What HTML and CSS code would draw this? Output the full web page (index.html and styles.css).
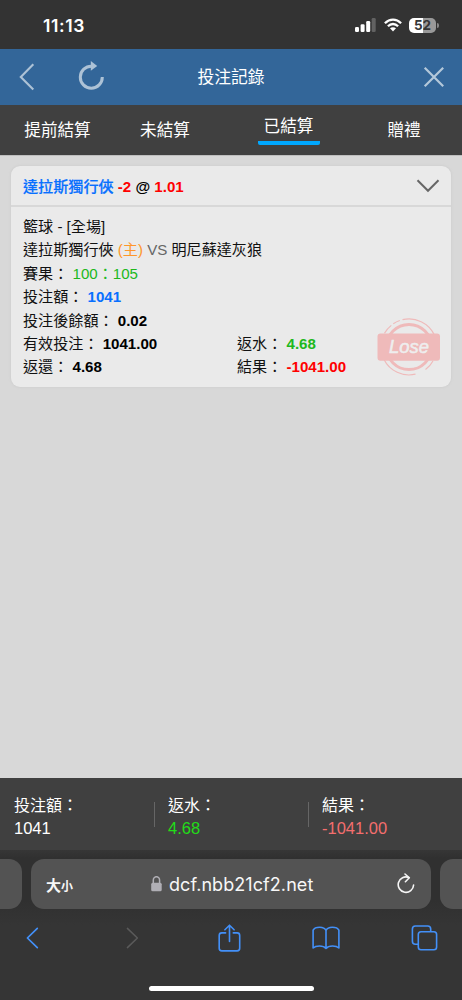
FILE: index.html
```html
<!DOCTYPE html>
<html lang="zh-Hant">
<head>
<meta charset="utf-8">
<meta name="viewport" content="width=device-width, initial-scale=1">
<title>投注記錄</title>
<link rel="stylesheet" href="styles.css">
</head>
<body>
<div class="screen">
  <div class="status">
    <span class="clock">11:13</span>
    <svg class="signal" width="21" height="14" viewBox="0 0 21 14">
      <rect x="0" y="9" width="4" height="5" rx="1.2" fill="#fff"/>
      <rect x="5.6" y="6.3" width="4" height="7.7" rx="1.2" fill="#fff"/>
      <rect x="11.2" y="3" width="4" height="11" rx="1.2" fill="#fff"/>
      <rect x="16.7" y="0" width="4" height="14" rx="1.2" fill="#626262"/>
    </svg>
    <svg class="wifi" width="18" height="14" viewBox="0 0 18 14">
      <g fill="none" stroke="#fff" stroke-width="2.3">
        <path d="M.9 5.2Q4.5 1.6 9 1.6t8.1 3.6"/>
        <path d="M3.9 8.3Q6.2 6 9 6t5.1 2.3"/>
      </g>
      <path d="M9 13.4l-3-3.1Q7.3 9.2 9 9.2t3 1.1z" fill="#fff"/>
    </svg>
    <div class="battery"><span class="charge">5</span><span>2</span></div>
  </div>

  <header class="titlebar">
    <svg class="back" width="16" height="28" viewBox="0 0 16 28"><path d="M14.3 1.2L1.8 14l12.5 12.6" fill="none" stroke="#adc2d6" stroke-width="2.1"/></svg>
    <svg class="reload" width="27" height="30" viewBox="0 0 27 30"><path d="M13.7 5.2A11 11 0 1 0 24.3 16" fill="none" stroke="#adc2d6" stroke-width="3"/><path d="M12.8 0l6.4 5.1-6.4 4.7z" fill="#adc2d6"/></svg>
    <h1>投注記錄</h1>
    <svg class="close" width="22" height="22" viewBox="0 0 22 22"><path d="M1.7 1.7l18.5 18.5M20.2 1.7L1.7 20.2" fill="none" stroke="#b4c8da" stroke-width="2.2"/></svg>
  </header>

  <nav class="tabs">
    <span>提前結算</span><span>未結算</span><span class="active">已結算</span><span>贈禮</span>
  </nav>

  <main>
    <article class="card">
      <div class="card-head">
        <span class="pick"><b class="team">達拉斯獨行俠</b> <b class="red">-2</b> <b>@</b> <b class="red">1.01</b></span>
        <svg width="24" height="14" viewBox="0 0 24 14"><path d="M1.5 1.3L12 11.8 22.5 1.3" fill="none" stroke="#666" stroke-width="2"/></svg>
      </div>
      <div class="card-body">
        <div class="row">籃球 - [全場]</div>
        <div class="row">達拉斯獨行俠 <span class="home">(主)</span> <span class="versus">VS</span> 明尼蘇達灰狼</div>
        <div class="row">賽果： <span class="green">100：105</span></div>
        <div class="row">投注額： <b class="blue">1041</b></div>
        <div class="row">投注後餘額： <b>0.02</b></div>
        <div class="row split"><span>有效投注： <b>1041.00</b></span><span>返水： <b class="green">4.68</b></span></div>
        <div class="row split"><span>返還： <b>4.68</b></span><span>結果： <b class="red">-1041.00</b></span></div>
        <svg class="stamp" width="64" height="60" viewBox="0 0 64 60">
          <g fill="none" stroke="#efbaba">
            <circle cx="32" cy="30" r="22.6" stroke-width="3"/>
            <g stroke-width="1.2">
              <path d="M25.5 2.7A28 28 0 0 1 57.4 18"/>
              <path d="M16.3 6.7a28 28 0 0 1 6.5-3.2"/>
              <path d="M7.5 16.2A28 28 0 0 1 14.3 8.4"/>
              <path d="M7 42.5A28 28 0 0 0 38.5 57.2"/>
              <path d="M48.5 52.6A28 28 0 0 0 56 44"/>
            </g>
          </g>
          <rect x=".5" y="16.5" width="62.5" height="27.3" rx="3" fill="#efbaba"/>
          <text x="12" y="36" textLength="40" lengthAdjust="spacingAndGlyphs">Lose</text>
        </svg>
      </div>
    </article>
  </main>

  <section class="totals">
    <div><p>投注額：</p><p class="amount">1041</p></div>
    <div><p>返水：</p><p class="amount lime">4.68</p></div>
    <div><p>結果：</p><p class="amount coral">-1041.00</p></div>
  </section>

  <footer class="browser">
    <div class="address-row">
      <div class="peek left"></div>
      <div class="address">
        <span class="size">大<small>小</small></span>
        <svg class="lock" width="11" height="16" viewBox="0 0 11 16"><rect x=".2" y="6.7" width="10.5" height="8.6" rx="1.5" fill="#b0afb5"/><path d="M2.3 7V4.2a3.15 3.5 0 0 1 6.3 0V7" fill="none" stroke="#b0afb5" stroke-width="1.5"/></svg>
        <span class="url">dcf.nbb21cf2.net</span>
        <svg class="refresh" width="18" height="22" viewBox="0 0 18 22"><g fill="none" stroke="#f5f5f5" stroke-width="1.6" stroke-linecap="round" stroke-linejoin="round"><path d="M11.8 4.5A7.7 7.7 0 1 0 16.6 12"/><path d="M8 1l4.3 3.8L8.4 8.7"/></g></svg>
      </div>
      <div class="peek right"></div>
    </div>
    <div class="tools">
      <svg width="13" height="22" viewBox="0 0 13 22"><path d="M11.3 1.4L1.4 11l9.9 9.6" fill="none" stroke="#4390f8" stroke-width="1.7" stroke-linecap="round" stroke-linejoin="round"/></svg>
      <svg width="13" height="22" viewBox="0 0 13 22"><path d="M1.4 1.4L11.4 11l-10 9.6" fill="none" stroke="#5a5a5a" stroke-width="1.5" stroke-linecap="round" stroke-linejoin="round"/></svg>
      <svg width="23" height="28" viewBox="0 0 23 28"><g fill="none" stroke="#4390f8" stroke-width="1.6" stroke-linecap="round" stroke-linejoin="round"><path d="M7.6 8.9H3.8q-2.6 0-2.6 2.6v12.8q0 2.6 2.6 2.6h15.3q2.6 0 2.6-2.6V11.5q0-2.6-2.6-2.6h-3.8"/><path d="M11.5 17.5V1.2M6.900 5.800l4.600-4.600 4.600 4.600"/></g></svg>
      <svg width="28" height="24" viewBox="0 0 28 24"><path d="M14 4.300Q12.500 1.400 7.700 1.300 2.500 1.300 1.100 4.200V22q2-2 6.400-2 4.500 0 6.500 2.500 2-2.500 6.500-2.500 4.400 0 6.400 2V4.200Q25.500 1.300 20.300 1.300 15.500 1.400 14 4.300V22" fill="none" stroke="#4390f8" stroke-width="1.600" stroke-linejoin="round"/></svg>
      <svg width="27" height="26" viewBox="0 0 27 26"><g fill="none" stroke="#4390f8" stroke-width="1.600"><rect x="7.300" y="6.700" width="18.300" height="18.100" rx="2.700"/><path d="M7.200 19.300H4.400q-3 0-3-3V4q0-3 3-3h12.300q3 0 3 3v2.600"/></g></svg>
    </div>
    <div class="home-bar"></div>
  </footer>
</div>
</body>
</html>
```
FILE: styles.css
```css
* { box-sizing: border-box; }
body {
  margin: 0;
  background: #353535;
  font-family: "Liberation Sans", "Noto Sans CJK TC", sans-serif;
}
svg { display: block; flex: none; }
h1, p { margin: 0; font-weight: 400; }

.screen {
  width: 462px;
  height: 1000px;
  display: flex;
  flex-direction: column;
  overflow: hidden;
}

.status {
  height: 49px;
  display: flex;
  align-items: center;
  padding: 1px 26px 0 43px;
  background: #333;
  color: #fff;
  font-family: Inter, sans-serif;
}
.clock { flex: 1; font-size: 17.5px; font-weight: 600; letter-spacing: 0.6px; }
.signal { margin-right: 8px; }
.wifi { margin-right: 7px; }
.battery {
  position: relative;
  width: 27px;
  height: 15px;
  display: flex;
  border-radius: 5px;
  background: linear-gradient(90deg, #fff 52%, #999 52%);
  color: #363636;
  font-size: 13.5px;
  font-weight: 700;
  line-height: 15px;
  justify-content: center;
}
.battery::after {
  content: "";
  position: absolute;
  right: -3px;
  top: 5px;
  width: 2px;
  height: 5px;
  border-radius: 0 2px 2px 0;
  background: #888;
}

.titlebar {
  height: 56px;
  display: grid;
  grid-template-columns: 59px 60px 1fr 60px 59px;
  align-items: center;
  background: #336699;
  color: #fff;
}
.titlebar h1 { padding-top: 2px; font-size: 16.8px; line-height: 24px; text-align: center; }
.back { margin-left: 19px; }
.reload { margin: 0 0 3px 19px; }
.close { grid-column: 5; margin-left: 20px; }

.tabs {
  height: 50px;
  display: grid;
  grid-template-columns: 115px 100px 147px 84px;
  align-items: center;
  justify-items: center;
  padding-top: 2px;
  background: #404040;
  color: #fff;
  font-size: 16.6px;
  line-height: 24px;
}
.tabs .active {
  width: 62px;
  margin-bottom: 2px;
  padding-bottom: 2px;
  border-bottom: 4px solid #00a8ff;
  border-radius: 0 0 2px 2px;
  text-align: center;
}

main {
  flex: 1;
  padding: 10px 11px;
  background: #d8d8d8;
  border-top: 1px solid #bebebe;
}
.card {
  height: 221px;
  border-radius: 9px;
  background: #eaeaea;
  box-shadow: 0 0 3px #c8c8c8;
  color: #111;
  font-size: 15.1px;
}
.card-head {
  height: 41px;
  display: flex;
  align-items: center;
  justify-content: space-between;
  padding: 0 11px 0 12px;
  border-bottom: 2px solid #d8d8d8;
}
.pick { padding-bottom: 2px; }
.card-head .team { color: #0870ff; font-weight: 500; -webkit-text-stroke: .2px #0870ff; }
.card-body { position: relative; padding: 8px 12px; }
.row { height: 23.4px; line-height: 23.4px; white-space: pre; }
.split { display: grid; grid-template-columns: 214px 1fr; }
.card b { color: #000; }
.card .red { color: #f00; }
.card .green { color: #20b81c; }
.card .blue { color: #0870ff; }
.home { color: #ff962a; }
.versus { color: #666; }
.stamp { position: absolute; left: 366px; top: 110px; }
.stamp text {
  font: italic 400 17.5px "Liberation Sans", sans-serif;
  fill: #eee;
  stroke: #eee;
  stroke-width: .5px;
}

.totals {
  height: 72px;
  display: grid;
  grid-template-columns: 154px 154px 1fr;
  padding-top: 16px;
  background: #404040;
  color: #fff;
  font-size: 16px;
  line-height: 23.4px;
}
.totals div { position: relative; padding-left: 14px; }
.totals .amount { font-size: 16.5px; }
.totals div + div::before {
  content: "";
  position: absolute;
  left: 0;
  top: 8px;
  width: 1px;
  height: 25px;
  background: #666;
}
.totals .lime { color: #22dd18; }
.totals .coral { color: #f46e6e; }

.browser {
  height: 150px;
  background: linear-gradient(#363636, #303030 8px, #303030 50px, #353535 75px);
}
.address-row { display: flex; gap: 9px; padding-top: 9px; }
.peek, .address { height: 50px; background: #535353; }
.peek { width: 22px; }
.left { border-radius: 0 13px 13px 0; }
.right { border-radius: 13px 0 0 13px; }
.address {
  width: 400px;
  border-radius: 13px;
  display: flex;
  align-items: center;
  padding: 0 16px 0 15px;
  color: #f7f7f7;
}
.size { font-size: 15px; font-weight: 700; width: 105px; }
.size small { font-size: 12px; }
.lock { margin-right: 7px; }
.url { flex: 1; font-family: Inter, sans-serif; font-size: 18px; letter-spacing: 0.07px; }
.tools {
  height: 56px;
  display: grid;
  grid-template-columns: 65px 135px 58px 136px 60px;
  align-items: center;
  justify-items: center;
  padding-top: 1px;
}
.tools svg:nth-child(2) { justify-self: center; }
.home-bar {
  width: 165px;
  height: 5px;
  margin: 21px auto 0;
  border-radius: 3px;
  background: #fff;
}
```
